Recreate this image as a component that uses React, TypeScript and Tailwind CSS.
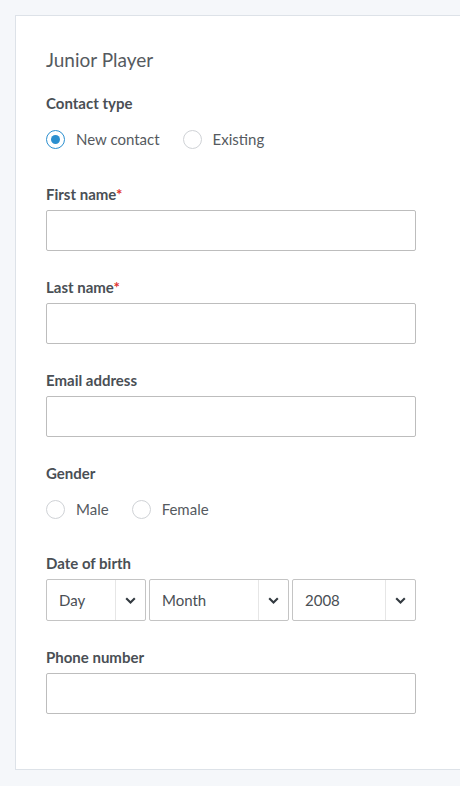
import { useState } from 'react'

function Radio({ label, checked, onClick }: { label: string; checked?: boolean; onClick?: () => void }) {
  return (
    <button type="button" onClick={onClick} className="flex items-center gap-[11px] text-[15px] text-[#555a60]">
      <span
        className={`w-[19px] h-[19px] rounded-full border flex items-center justify-center bg-white ${
          checked ? 'border-[#2b8fcf]' : 'border-[#cfd2d6]'
        }`}
      >
        {checked && <span className="w-[9px] h-[9px] rounded-full bg-[#2b8fcf]" />}
      </span>
      {label}
    </button>
  )
}

function Field({ label, required }: { label: string; required?: boolean }) {
  return (
    <div className="mb-[26px]">
      <label className="block text-[15px] leading-[20px] font-bold text-[#4a4f55] mb-[6px]">
        {label}
        {required && <span className="text-[#e0322f]">*</span>}
      </label>
      <input className="block w-full h-[41px] border border-[#bdbdbd] rounded-[2px] bg-white px-3 outline-none" />
    </div>
  )
}

function Select({ value, className }: { value: string; className: string }) {
  return (
    <div className={`h-[42px] border border-[#c4c4c4] rounded-[2px] flex items-stretch bg-white ${className}`}>
      <span className="flex-1 flex items-center pl-[12px] text-[15px] text-[#4a4f55]">{value}</span>
      <span className="w-[30px] border-l border-[#e6e6e6] flex items-center justify-center">
        <svg width="11" height="7" viewBox="0 0 11 7" fill="none">
          <path d="M1.2 1.2 5.5 5.5l4.3-4.3" stroke="#333a40" strokeWidth="2.1" />
        </svg>
      </span>
    </div>
  )
}

export default function App() {
  const [contact, setContact] = useState<'new' | 'existing'>('new')
  const [gender, setGender] = useState<'' | 'male' | 'female'>('')

  return (
    <div className="min-h-[786px] bg-[#f5f7fa] pt-[15px] pl-[15px] pb-[16px] font-['Lato',sans-serif]">
      <div className="bg-white border-t border-l border-b border-[#dde2e8] pt-[32px] pl-[30px] pr-[44px] pb-[29px]">
        <h2 className="text-[19px] leading-[24px] text-[#555a60] mb-[21px]">Junior Player</h2>

        <div className="text-[15px] leading-[20px] font-bold text-[#4a4f55] mb-[16px]">Contact type</div>
        <div className="flex items-center gap-[23px] h-[20px] mb-[35px]">
          <Radio label="New contact" checked={contact === 'new'} onClick={() => setContact('new')} />
          <Radio label="Existing" checked={contact === 'existing'} onClick={() => setContact('existing')} />
        </div>

        <Field label="First name" required />
        <Field label="Last name" required />
        <Field label="Email address" />

        <div className="text-[15px] leading-[20px] font-bold text-[#4a4f55] mb-[16px]">Gender</div>
        <div className="flex items-center gap-[23px] h-[20px] mb-[34px]">
          <Radio label="Male" checked={gender === 'male'} onClick={() => setGender('male')} />
          <Radio label="Female" checked={gender === 'female'} onClick={() => setGender('female')} />
        </div>

        <div className="mb-[26px]">
          <div className="text-[15px] leading-[20px] font-bold text-[#4a4f55] mb-[6px]">Date of birth</div>
          <div className="flex gap-[3px]">
            <Select value="Day" className="w-[100px]" />
            <Select value="Month" className="w-[140px]" />
            <Select value="2008" className="flex-1" />
          </div>
        </div>

        <Field label="Phone number" />
      </div>
    </div>
  )
}
